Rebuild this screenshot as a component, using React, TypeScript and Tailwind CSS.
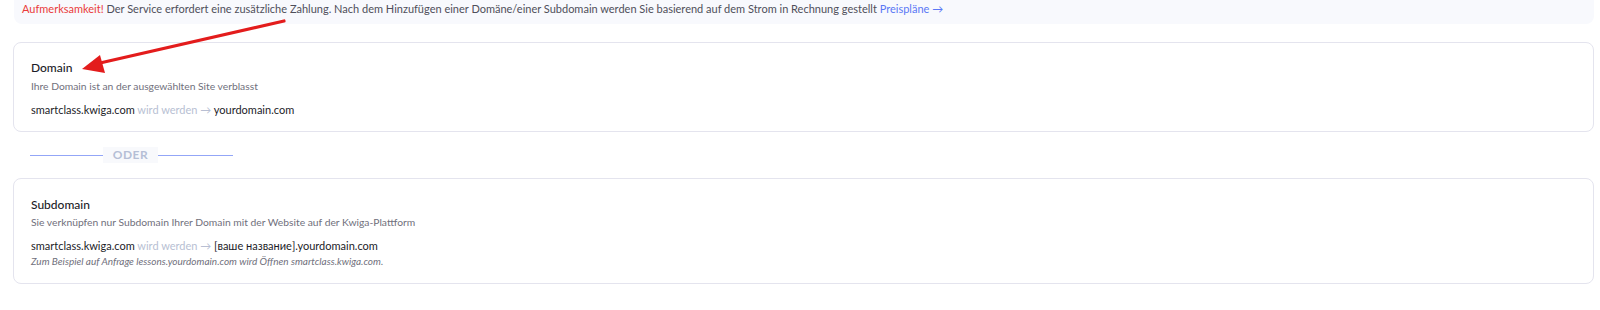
import React from "react";

const font = { fontFamily: "Lato, 'Open Sans', sans-serif" };

function DomainLine({ target }: { target: string }) {
  return (
    <div className="text-[11px] leading-[16px] text-[#1c1c28]">
      smartclass.kwiga.com <span className="text-[#b8bfd3]">wird werden →</span> {target}
    </div>
  );
}

export default function App() {
  return (
    <div className="relative w-[1600px] h-[310px] bg-white overflow-hidden" style={font}>
      <div className="pl-[14px] pr-[6px]">
        <div className="h-[24px] bg-[#f8f9fd] rounded-b-lg pl-[8px] pt-[2px] text-[11px] leading-[14px] text-[#4f4f5a]">
          <span className="text-[#ea3b3b]">Aufmerksamkeit!</span> Der Service erfordert eine zusätzliche Zahlung. Nach dem Hinzufügen einer Domäne/einer Subdomain werden Sie basierend auf dem Strom in Rechnung gestellt{" "}
          <span className="text-[#5a78f5]">Preispläne →</span>
        </div>
      </div>

      <div className="pl-[13px] pr-[6px] pt-[18px]">
        <div className="border border-[#e4e4ee] rounded-lg pl-[17px] pt-[17px] pb-[13px]">
          <div className="text-[12px] leading-[16px] font-medium text-[#1c1c28]">Domain</div>
          <div className="mt-[2px] text-[10.3px] leading-[16px] text-[#70707c]">Ihre Domain ist an der ausgewählten Site verblasst</div>
          <div className="mt-[8px]">
            <DomainLine target="yourdomain.com" />
          </div>
        </div>

        <div className="flex items-center h-[46px] pl-[17px]">
          <div className="w-[73px] h-px bg-[#93a6f7]" />
          <div className="w-[55px] h-[16px] bg-[#f8f9fc] flex items-center justify-center text-[12px] font-bold tracking-[0.5px] text-[#b5bfd6]">ODER</div>
          <div className="w-[75px] h-px bg-[#93a6f7]" />
        </div>

        <div className="border border-[#e4e4ee] rounded-lg pl-[17px] pt-[18px] pb-[16px]">
          <div className="text-[12px] leading-[16px] font-medium text-[#1c1c28]">Subdomain</div>
          <div className="mt-[1px] text-[10.3px] leading-[16px] text-[#70707c]">Sie verknüpfen nur Subdomain Ihrer Domain mit der Website auf der Kwiga-Plattform</div>
          <div className="mt-[8px]">
            <DomainLine target="[ваше название].yourdomain.com" />
          </div>
          <div className="mt-[1px] text-[10px] leading-[12px] italic text-[#70707c]">
            Zum Beispiel auf Anfrage lessons.yourdomain.com wird Öffnen smartclass.kwiga.com.
          </div>
        </div>
      </div>

      <svg className="absolute left-0 top-0 pointer-events-none" width="320" height="90" viewBox="0 0 320 90">
        <line x1="284" y1="21" x2="100" y2="63" stroke="#e31c1c" strokeWidth="3.2" strokeLinecap="round" />
        <polygon points="82,69 100,55 105,73" fill="#e31c1c" />
      </svg>
    </div>
  );
}
